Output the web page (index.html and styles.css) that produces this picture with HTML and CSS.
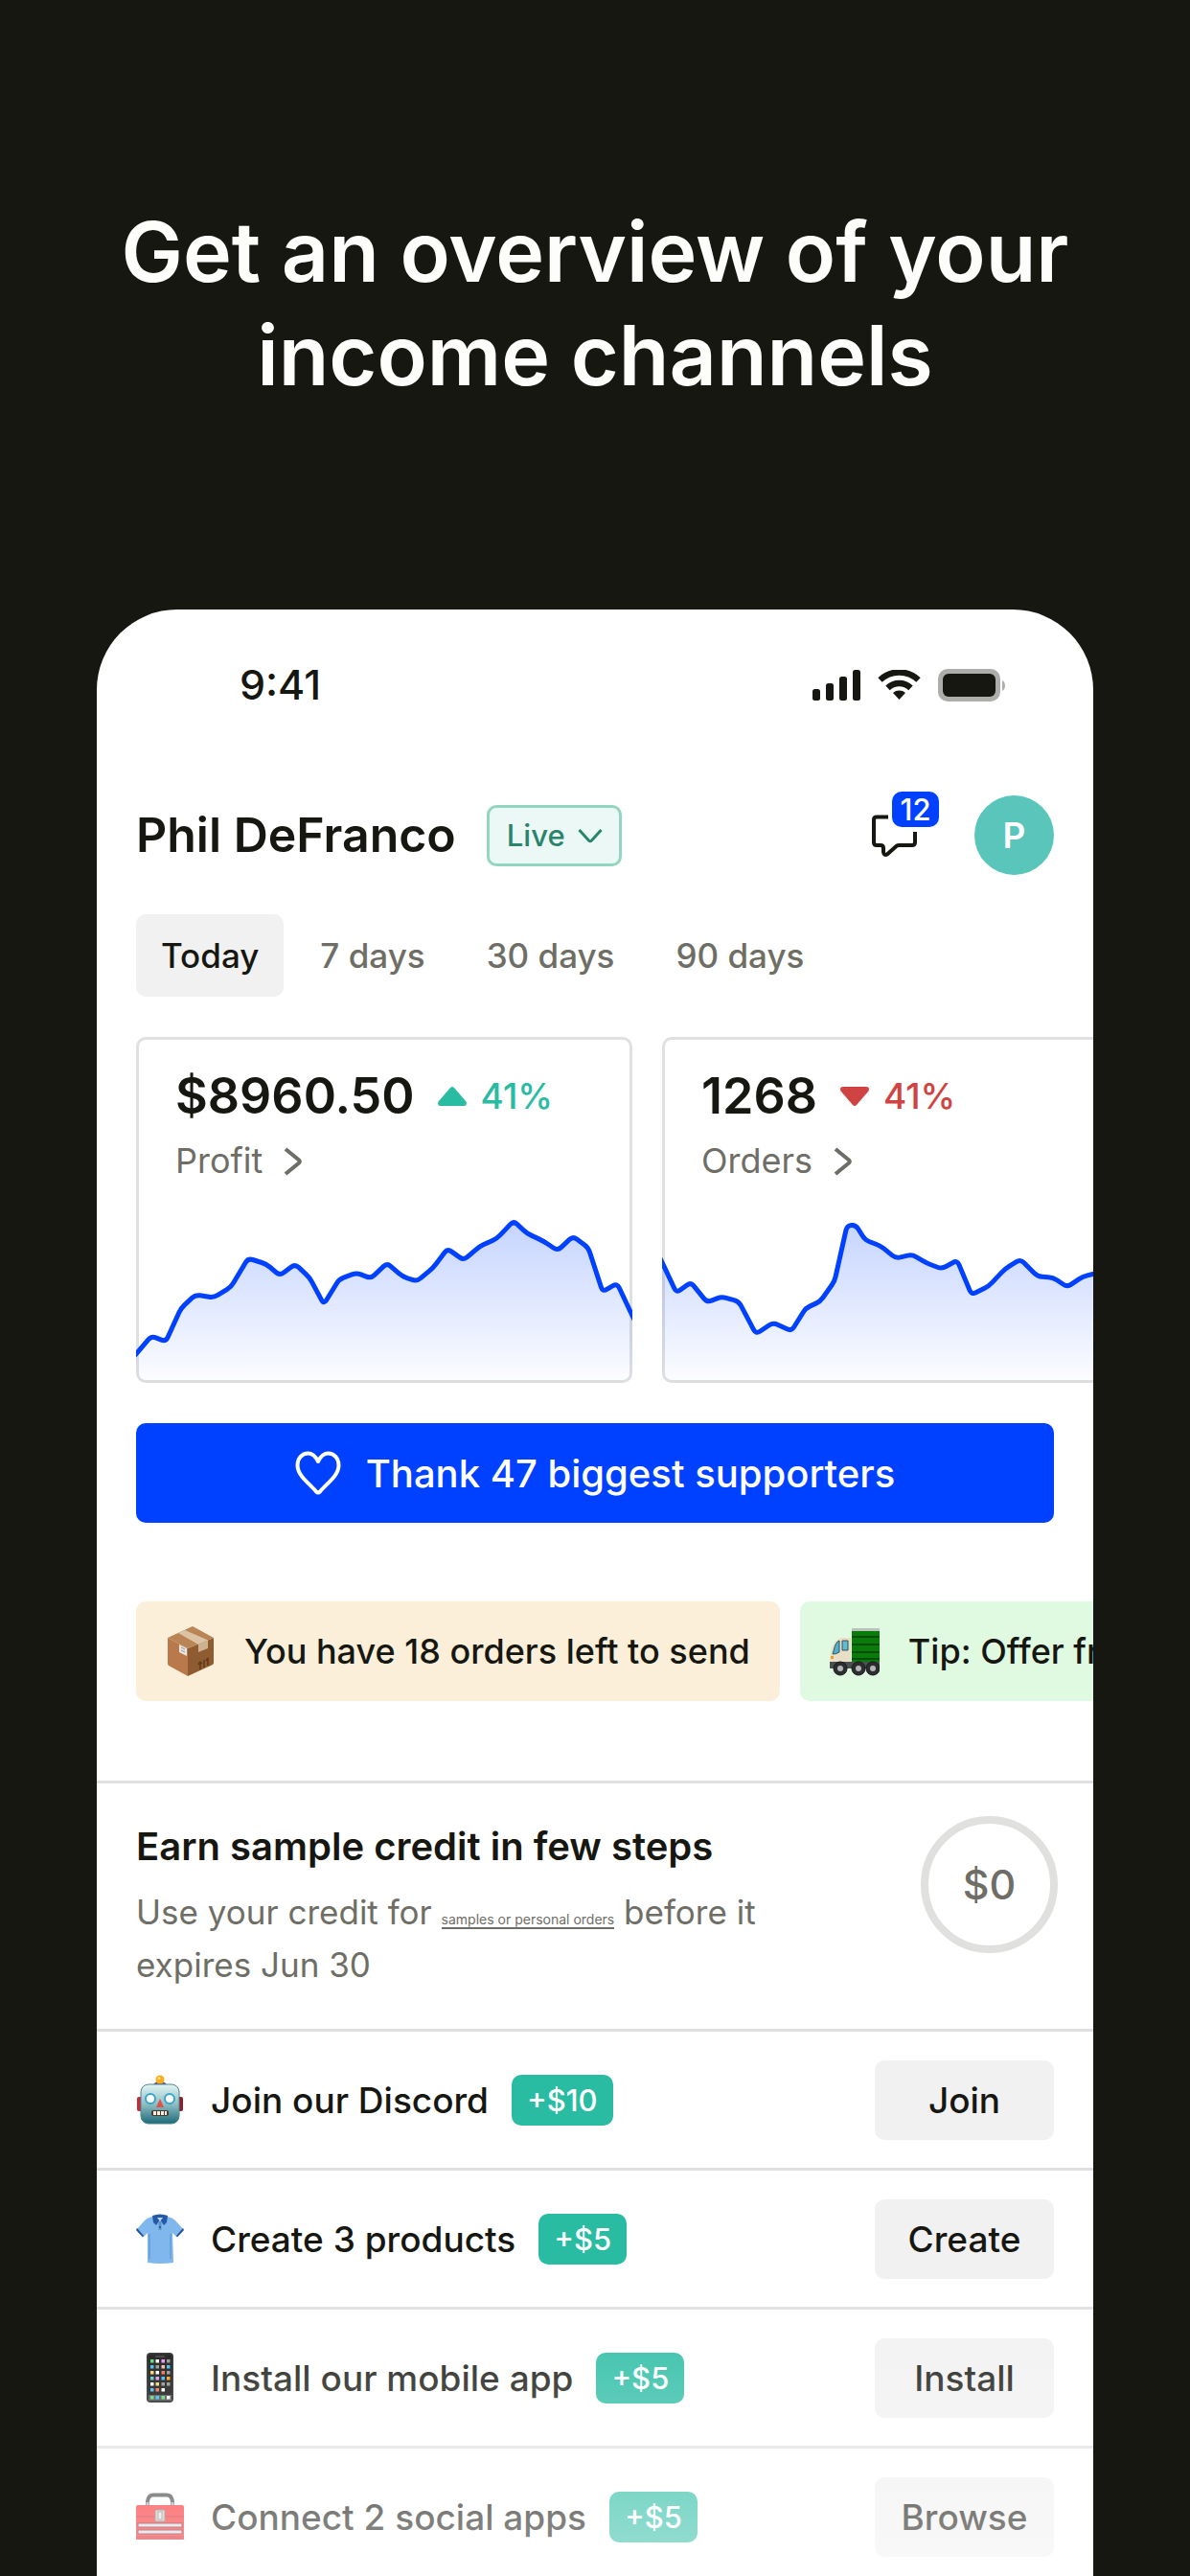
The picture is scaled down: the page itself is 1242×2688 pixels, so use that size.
FILE: index.html
```html
<!DOCTYPE html>
<html lang="en">
<head>
    <meta charset="UTF-8">
    <meta name="viewport" content="width=device-width, initial-scale=1.0">
    <title>Income overview</title>
    <link rel="stylesheet" href="styles.css">
</head>
<body>

    <h1 class="headline">Get an overview of your<br>income channels</h1>

    <main class="phone">
        <div class="status-bar">
            <span class="clock">9:41</span>
            <div class="status-icons">
                <svg width="50" height="32" viewBox="0 0 50 32" fill="#171712">
                    <rect x="0" y="20" width="8" height="12" rx="2.5"/>
                    <rect x="14" y="14" width="8" height="18" rx="2.5"/>
                    <rect x="28" y="7" width="8" height="25" rx="2.5"/>
                    <rect x="42" y="0" width="8" height="32" rx="2.5"/>
                </svg>
                <svg width="45" height="32" viewBox="0 0 45 32" fill="none" stroke="#171712" stroke-width="6.4">
                    <path d="M2.500 10.500A29 29 0 0 1 42.500 10.500"/>
                    <path d="M10.500 18.800A17.500 17.500 0 0 1 34.500 18.800"/>
                    <path d="M22.500 21.500C20 21.500 17.800 22.300 16 24L22.500 31L29 24C27.200 22.300 25 21.500 22.500 21.500z" fill="#171712" stroke="none"/>
                </svg>
                <svg width="71" height="34" viewBox="0 0 71 34">
                    <rect x="0" y="0" width="65" height="34" rx="10" fill="#adadab"/>
                    <rect x="5" y="5" width="55" height="24" rx="6" fill="#171712"/>
                    <path d="M67 12c4 2 4 9 0 11z" fill="#adadab"/>
                </svg>
            </div>
        </div>

        <header class="store">
            <h2 class="store-name">Phil DeFranco</h2>
            <div class="store-status">
                <select aria-label="Store status">
                    <option>Live</option>
                </select>
                <svg width="26" height="16" viewBox="0 0 26 16" fill="none" stroke="#2a846c" stroke-width="3">
                    <path d="M1.500 2L11.500 13Q13 14.500 14.500 13L24.500 2"/>
                </svg>
            </div>
            <button class="messages" aria-label="Messages">
                <svg width="50" height="46" viewBox="0 0 50 46" fill="none" stroke="#171712" stroke-width="4" stroke-linejoin="round">
                    <path d="M18 3.500H6Q3 3.500 3 6.500V30Q3 33 6 33H10Q13 33 13 36V40Q13.500 44.500 17.500 42L27 33.500Q28 33 29 33H43Q46 33 46 30V19"/>
                </svg>
                <span class="count">12</span>
            </button>
            <button class="avatar" aria-label="Account">P</button>
        </header>

        <nav class="periods">
            <button class="period active">Today</button>
            <button class="period">7 days</button>
            <button class="period">30 days</button>
            <button class="period">90 days</button>
        </nav>

        <section class="stats">
            <article class="stat">
                <div class="stat-top">
                    <span class="stat-value">$8960.50</span>
                    <span class="trend up">
                        <svg width="30" height="20" viewBox="0 0 30 20" fill="currentColor"><path d="M13 1Q15 -1 17 1L29.500 15.500Q31 20 27 20H3Q-1 20 .500 15.500z"/></svg>
                        41%
                    </span>
                </div>
                <a class="stat-link" href="#">Profit
                    <svg width="20" height="30" viewBox="0 0 20 30" fill="none" stroke="currentColor" stroke-width="4"><path d="M2 2L16 13.500Q17.500 15 16 16.500L2 28"/></svg>
                </a>
                <svg class="chart" data-series="profit" viewBox="0 0 518 180" preserveAspectRatio="none"></svg>
            </article>
            <article class="stat">
                <div class="stat-top">
                    <span class="stat-value">1268</span>
                    <span class="trend down">
                        <svg width="30" height="20" viewBox="0 0 30 20" fill="currentColor"><path d="M13 19Q15 21 17 19L29.500 4.500Q31 0 27 0H3Q-1 0 .500 4.500z"/></svg>
                        41%
                    </span>
                </div>
                <a class="stat-link" href="#">Orders
                    <svg width="20" height="30" viewBox="0 0 20 30" fill="none" stroke="currentColor" stroke-width="4"><path d="M2 2L16 13.500Q17.500 15 16 16.500L2 28"/></svg>
                </a>
                <svg class="chart" data-series="orders" viewBox="0 0 518 180" preserveAspectRatio="none"></svg>
            </article>
        </section>

        <button class="thank">
            <svg width="48" height="46" viewBox="0 0 48 46" fill="none" stroke="#fff" stroke-width="4" stroke-linejoin="round">
                <path d="M24 11C21 5 17.500 2.500 13.500 2.500C7 2.500 2.500 8 2.500 15C2.500 26 15 34 22 42.500Q24 44.500 26 42.500C33 34 45.500 26 45.500 15C45.500 8 41 2.500 34.500 2.500C30.500 2.500 27 5 24 11z"/>
            </svg>
            Thank 47 biggest supporters
        </button>

        <section class="notices">
            <a class="notice orders-left" href="#">
                <!-- package -->
                <svg width="52" height="52" viewBox="0 0 52 52">
                    <path d="M2 12L23 23V52L3 41Q2 40 2 39z" fill="#b9794a"/>
                    <path d="M50 12L23 23V52L49 40Q50 39 50 38z" fill="#8f5b30"/>
                    <path d="M2 12L28 0L50 12L23 23z" fill="#b98456"/>
                    <path d="M13 7L20 4L44 14.500L34 19z" fill="#dcc3a6"/>
                    <path d="M34 19L44 14.500V23L34 27z" fill="#cdb193"/>
                    <path d="M14 19L22 23V31L14 27z" fill="#e9e7e4"/>
                    <path d="M16 22l4 2M16 25l4 2" stroke="#8b93a0" stroke-width="1"/>
                    <path d="M36 37v8M36 37l-2 3M36 37l2 2M44 33v8M44 33l-2 3M40 35v8" fill="none" stroke="#5f3a1c" stroke-width="1.500"/>
                </svg>
                You have 18 orders left to send
            </a>
            <a class="notice tip" href="#">
                <!-- truck -->
                <svg width="52" height="52" viewBox="0 0 52 52">
                    <path d="M1 26Q5 13 12 12H22V42H2Q0 42 0 38z" fill="#e8dfc6"/>
                    <path d="M4 26Q6 16 10 15V27Q7 29 3 29z" fill="#4fb0cf" stroke="#355" stroke-width="1"/>
                    <path d="M13 15H19V25H13z" fill="#5fbcd8" stroke="#355" stroke-width="1"/>
                    <path d="M1 31h3v3H1z" fill="#f39a2c"/>
                    <rect x="23" y="3" width="29" height="36" fill="#0a7a0a"/>
                    <rect x="23" y="2" width="29" height="3" fill="#b9c4ba"/>
                    <path d="M23 11H52M23 19H52M23 27H52M23 34H52" stroke="#04500a" stroke-width="2"/>
                    <path d="M0 37H52V44H0z" fill="#4b4f52"/>
                    <g fill="#2c2d2f" stroke="#17181a" stroke-width="1">
                        <circle cx="11" cy="44" r="7"/><circle cx="30" cy="44" r="7"/><circle cx="45" cy="44" r="7"/>
                    </g>
                    <g fill="#b3b5b8">
                        <circle cx="11" cy="44" r="3"/><circle cx="30" cy="44" r="3"/><circle cx="45" cy="44" r="3"/>
                    </g>
                </svg>
                Tip: Offer free shipping
            </a>
        </section>

        <section class="credit">
            <div class="credit-text">
                <h3>Earn sample credit in few steps</h3>
                <p>Use your credit for <a href="#">samples or personal orders</a> before it expires Jun 30</p>
            </div>
            <div class="credit-amount">$0</div>
        </section>

        <ul class="tasks">
            <li class="task">
                <!-- robot -->
                <svg width="50" height="52" viewBox="0 0 50 52">
                    <defs>
                        <linearGradient id="robot" x1="0" y1="0" x2="0" y2="1">
                            <stop offset="0" stop-color="#e2f5f4"/>
                            <stop offset=".5" stop-color="#8fbfc4"/>
                            <stop offset="1" stop-color="#1d6a78"/>
                        </linearGradient>
                    </defs>
                    <rect x="1" y="23" width="6" height="15" rx="2" fill="#c32b38"/>
                    <rect x="43" y="23" width="6" height="15" rx="2" fill="#8c1f2b"/>
                    <path d="M18 11Q19 7 25 7Q31 7 32 11z" fill="#6b4a96"/>
                    <circle cx="25" cy="5" r="4.500" fill="#fbab1c"/>
                    <circle cx="24" cy="3.500" r="1.500" fill="#ffe27a"/>
                    <rect x="5" y="10" width="40" height="41" rx="8" fill="url(#robot)" stroke="#4f8790" stroke-width="1"/>
                    <circle cx="15" cy="25" r="5" fill="#fff" stroke="#35a4cf" stroke-width="2"/>
                    <circle cx="35" cy="25" r="5" fill="#fff" stroke="#35a4cf" stroke-width="2"/>
                    <path d="M25 25L29 34H21z" fill="#e0504a"/>
                    <rect x="16" y="37" width="18" height="6" rx="2" fill="#4a3a36"/>
                    <path d="M18 38h3v4h-3zM22 38h3v4h-3zM26 38h3v4h-3zM30 38h2v4h-2z" fill="#f5efe0"/>
                </svg>
                <span class="task-name">Join our Discord</span>
                <span class="reward">+$10</span>
                <button class="action">Join</button>
            </li>
            <li class="task">
                <!-- shirt -->
                <svg width="50" height="52" viewBox="0 0 50 52">
                    <path d="M17 3Q25 0 33 3Q38 4 41 7L49 16L42 24L38 20L39 51Q25 53 12 51L12 20L8 24L1 16L9 7Q12 4 17 3z" fill="#80b7ec"/>
                    <path d="M1 15L8 23L7 24.500L0 17zM49 15L42 23L43 24.500L50 17z" fill="#234f93"/>
                    <path d="M17 2Q25 -1 33 2L32 9L29 12L25 6L21 12L18 9z" fill="#2359a5"/>
                    <path d="M22 4H28L25 8z" fill="#bfd2e6"/>
                    <path d="M25 8V17" stroke="#5a93cc" stroke-width="3"/>
                    <path d="M14 21V47M36 21V47" stroke="#6aa5df" stroke-width="2"/>
                    <circle cx="25" cy="14" r="1" fill="#244c80"/>
                </svg>
                <span class="task-name">Create 3 products</span>
                <span class="reward">+$5</span>
                <button class="action">Create</button>
            </li>
            <li class="task">
                <!-- phone -->
                <svg width="50" height="52" viewBox="0 0 50 52">
                    <rect x="11" y="0" width="28" height="52" rx="4" fill="#1c1c1c"/>
                    <rect x="12.500" y="1.500" width="25" height="49" rx="3" fill="#050505"/>
                    <rect x="20" y="3" width="10" height="2" rx="1" fill="#2b2b2b"/>
                    <rect x="13" y="44" width="24" height="6" fill="#444"/>
                    <g fill="#4cd964"><path d="M15 7h3.500v3.500H15zM15 45h3.500v3.500H15zM26.500 45H30v3.500h-3.500z"/></g>
                    <g fill="#fff"><path d="M20.500 7H24v3.500h-3.500zM20.500 19H24v3.500h-3.500zM15 31h3.500v3.500H15zM26.500 37H30v3.500h-3.500zM32 45h3.500v3.500H32z"/></g>
                    <g fill="#e78cf0"><path d="M26.500 7H30v3.500h-3.500zM20.500 25H24v3.500h-3.500z"/></g>
                    <g fill="#8b8b8b"><path d="M32 7h3.500v3.500H32zM20.500 13H24v3.500h-3.500zM32 19h3.500v3.500H32zM26.500 31H30v3.500h-3.500zM32 31h3.500v3.500H32z"/></g>
                    <g fill="#2fb4f2"><path d="M15 13h3.500v3.500H15zM32 13h3.500v3.500H32zM26.500 25H30v3.500h-3.500zM15 37h3.500v3.500H15zM20.500 45H24v3.500h-3.500z"/></g>
                    <g fill="#f7d25a"><path d="M15 19h3.500v3.500H15zM20.500 31H24v3.500h-3.500z"/></g>
                    <g fill="#f0634f"><path d="M26.500 19H30v3.500h-3.500zM20.500 37H24v3.500h-3.500z"/></g>
                    <g fill="#ff9500"><path d="M32 25h3.500v3.500H32z"/></g>
                    <g fill="#e3bb98"><path d="M26.500 13H30v3.500h-3.500z"/></g>
                    <g fill="#48c9c0"><path d="M15 25h3.500v3.500H15z"/></g>
                </svg>
                <span class="task-name">Install our mobile app</span>
                <span class="reward">+$5</span>
                <button class="action">Install</button>
            </li>
            <li class="task">
                <!-- toolbox -->
                <svg width="50" height="52" viewBox="0 0 50 52">
                    <path d="M12 16V10Q13 3.500 18 3.500H32Q37 3.500 38 10V16" fill="none" stroke="#3d3f42" stroke-width="4"/>
                    <path d="M12 11v5M38 11v5" stroke="#a9adb3" stroke-width="3"/>
                    <rect x="0" y="14" width="50" height="36" rx="2" fill="#f8262a"/>
                    <path d="M0 26H50" stroke="#c01a1e" stroke-width="1"/>
                    <rect x="0" y="46" width="50" height="4" rx="1" fill="#d81c21"/>
                    <rect x="2" y="33" width="46" height="4" fill="#d5dbe5" stroke="#8b1518" stroke-width="1"/>
                    <rect x="2" y="40" width="46" height="4" fill="#d5dbe5" stroke="#8b1518" stroke-width="1"/>
                    <rect x="20" y="19" width="10" height="12" rx="1" fill="#c9c3c0" stroke="#7d6f6c" stroke-width="1"/>
                    <rect x="23" y="21" width="4" height="8" fill="#e8e5e2" stroke="#8a7f7c" stroke-width="1"/>
                </svg>
                <span class="task-name">Connect 2 social apps</span>
                <span class="reward">+$5</span>
                <button class="action">Browse</button>
            </li>
        </ul>
        <div class="fade"></div>
    </main>

    <script src="script.js"></script>
</body>
</html>
```
FILE: styles.css
```css
* {
    box-sizing: border-box;
}

body {
    margin: 0;
    height: 100vh;
    overflow: hidden;
    display: flex;
    flex-direction: column;
    background-color: #171712;
    color: #171712;
    font-family: 'Inter', 'Liberation Sans', sans-serif;
    font-size: 37px;
    line-height: 55px;
    font-weight: 500;
}

h1, h2, h3, p, ul {
    margin: 0;
    padding: 0;
}

button, select {
    font: inherit;
    color: inherit;
    border: none;
    background: none;
    padding: 0;
    cursor: pointer;
}

a {
    color: inherit;
    text-decoration: none;
}

svg {
    display: block;
    flex: none;
}

.headline {
    padding: 209px 40px 211px;
    color: #fdfdfb;
    font-size: 86px;
    line-height: 108px;
    font-weight: 600;
    text-align: center;
}

/* Phone */
.phone {
    position: relative;
    flex: 1;
    min-height: 0;
    margin: 0 101px;
    overflow: hidden;
    background-color: #fff;
    border-radius: 84px 84px 0 0;
}

.status-bar {
    display: flex;
    align-items: center;
    justify-content: space-between;
    height: 157px;
    padding: 0 91px 0 149px;
}

.clock {
    font-size: 43px;
}

.status-icons {
    display: flex;
    align-items: center;
    gap: 18px;
}

/* Store header */
.store {
    display: flex;
    align-items: center;
    padding: 37px 41px 0;
}

.store-name {
    font-size: 50px;
    font-weight: 600;
}

.store-status {
    position: relative;
    margin-left: 32px;
    color: #2a846c;
}

.store-status select {
    display: block;
    appearance: none;
    height: 64px;
    padding: 0 56px 0 18px;
    border: 3px solid #93d5c1;
    border-radius: 10px;
    background-color: #ebf8f5;
    font-size: 31px;
}

.store-status svg {
    position: absolute;
    right: 20px;
    top: 24px;
    pointer-events: none;
}

.messages {
    position: relative;
    margin-left: auto;
    margin-right: 58px;
}

.count {
    position: absolute;
    left: 22px;
    top: -23px;
    width: 49px;
    border-radius: 10px;
    background-color: #0041ff;
    box-shadow: 0 0 0 4px #fff;
    color: #fff;
    font-size: 31px;
    line-height: 37px;
}

.avatar {
    width: 83px;
    height: 83px;
    border-radius: 50%;
    background-color: #5ac5ba;
    color: #fff;
    font-weight: 600;
}

/* Period tabs */
.periods {
    display: flex;
    gap: 12px;
    padding: 41px 41px 0;
}

.period {
    height: 86px;
    padding: 0 26px;
    border-radius: 10px;
    color: #6e6e66;
    font-size: 35px;
}

.period.active {
    background-color: #f1f1f1;
    color: #171712;
}

/* Stat cards */
.stats {
    display: flex;
    gap: 31px;
    padding: 42px 41px 0;
    overflow: hidden;
}

.stat {
    flex: 0 0 518px;
    padding: 27px 0 0;
    border: 3px solid #e0e0e0;
    border-radius: 10px;
}

.stat-top {
    display: flex;
    align-items: center;
    gap: 24px;
    padding-left: 38px;
}

.stat-value {
    font-size: 52px;
    line-height: 63px;
    font-weight: 600;
}

.trend {
    display: flex;
    align-items: center;
    gap: 15px;
}

.trend.up {
    color: #29bca3;
}

.trend.down {
    color: #d04343;
}

.stat-link {
    display: flex;
    align-items: center;
    gap: 22px;
    margin-top: 9px;
    padding-left: 38px;
    color: #6e6e66;
    font-size: 36px;
    font-weight: 400;
}

/* Covers the card border on three sides */
.chart {
    width: calc(100% + 6px);
    height: 180px;
    margin: 24px -3px -3px;
    border-radius: 0 0 10px 10px;
}

.thank {
    display: flex;
    align-items: center;
    justify-content: center;
    gap: 26px;
    width: calc(100% - 82px);
    height: 104px;
    margin: 42px 41px 0;
    border-radius: 10px;
    background-color: #0041ff;
    color: #fff;
    font-size: 40px;
}

/* Notices */
.notices {
    display: flex;
    gap: 21px;
    padding: 82px 41px 83px;
    overflow: hidden;
}

.notice {
    display: flex;
    flex: none;
    align-items: center;
    gap: 30px;
    height: 104px;
    padding: 0 31px;
    border-radius: 10px;
    font-size: 36px;
    white-space: nowrap;
}

.notice.orders-left {
    background-color: #fbefd9;
}

.notice.tip {
    background-color: #dffae1;
}

/* Sample credit */
.credit {
    display: flex;
    align-items: flex-start;
    justify-content: space-between;
    padding: 34px 37px 39px 41px;
    border-top: 3px solid #e0e0e0;
}

.credit-text {
    max-width: 700px;
    padding-top: 4px;
}

.credit h3 {
    font-size: 40px;
    font-weight: 600;
}

.credit p {
    margin-top: 14px;
    color: #6e6e66;
    font-size: 35px;
    font-weight: 400;
}

.credit p a {
    border-bottom: 2px solid #6e6e66;
    font-size: 14px;
    line-height: 16px;
}

.credit-amount {
    width: 143px;
    height: 143px;
    border: 8px solid #e0e0df;
    border-radius: 50%;
    color: #6e6e66;
    font-size: 43px;
    line-height: 127px;
    text-align: center;
}

/* Tasks */
.tasks {
    list-style: none;
}

.task {
    display: flex;
    align-items: center;
    height: 145px;
    padding: 0 41px;
    border-top: 3px solid #e0e0e0;
}

.task-name {
    margin-left: 28px;
}

.reward {
    margin-left: 24px;
    padding: 0 16px;
    border-radius: 10px;
    background-color: #29bca3;
    color: #fff;
    font-size: 31px;
    line-height: 53px;
}

.action {
    width: 187px;
    height: 83px;
    margin-left: auto;
    border-radius: 10px;
    background-color: #f1f1f1;
}

.fade {
    position: absolute;
    left: 0;
    right: 0;
    bottom: 0;
    height: 320px;
    background: linear-gradient(to bottom, rgba(255, 255, 255, 0), rgba(255, 255, 255, 0.54));
    pointer-events: none;
}
```
FILE: script.js
```js
// Chart points, in the 518 x 180 box of the chart
const series = {
    profit: [
        [-4, 154], [0, 150], [16, 131], [31, 137], [47, 102], [62, 88], [81, 91], [99, 80], [117, 50],
        [136, 56], [150, 68], [166, 56], [181, 70], [196, 98], [212, 72], [230, 65], [245, 71],
        [262, 55], [278, 69], [293, 74], [310, 60], [325, 40], [342, 52], [358, 38], [377, 29],
        [394, 11], [408, 24], [425, 32], [440, 42], [456, 27], [472, 39], [487, 85], [502, 76],
        [518, 110], [521, 116]
    ],
    orders: [
        [-4, 46], [0, 54], [15, 86], [30, 75], [47, 96], [62, 90], [80, 95], [98, 129], [116, 117],
        [135, 126], [150, 102], [165, 95], [180, 74], [193, 16], [202, 15], [212, 31], [228, 37],
        [244, 50], [261, 46], [276, 55], [292, 61], [308, 52], [323, 88], [341, 79], [358, 61],
        [374, 51], [392, 69], [408, 70], [423, 80], [439, 69], [460, 64], [490, 56], [521, 60]
    ]
};

const RADIUS = 5;

// Line through the points with softened corners
function linePath(points) {
    let d = `M${points[0][0]} ${points[0][1]}`;
    for (let i = 1; i < points.length - 1; i++) {
        const [x, y] = points[i];
        const before = toward(points[i], points[i - 1]);
        const after = toward(points[i], points[i + 1]);
        d += `L${before[0]} ${before[1]}Q${x} ${y} ${after[0]} ${after[1]}`;
    }
    const last = points[points.length - 1];
    return d + `L${last[0]} ${last[1]}`;
}

function toward(from, to) {
    const dx = to[0] - from[0];
    const dy = to[1] - from[1];
    const length = Math.hypot(dx, dy);
    const t = Math.min(RADIUS, length / 2) / length;
    return [from[0] + dx * t, from[1] + dy * t];
}

document.querySelectorAll('.chart').forEach((chart) => {
    const name = chart.dataset.series;
    const line = linePath(series[name]);
    chart.innerHTML = `
        <defs>
            <linearGradient id="fill-${name}" x1="0" y1="0" x2="0" y2="180" gradientUnits="userSpaceOnUse">
                <stop offset="0" stop-color="#0041ff" stop-opacity="0.24"/>
                <stop offset="1" stop-color="#0041ff" stop-opacity="0.01"/>
            </linearGradient>
        </defs>
        <path d="${line}V180H-4Z" fill="url(#fill-${name})"/>
        <path d="${line}" fill="none" stroke="#0041ff" stroke-width="5" stroke-linejoin="round"/>
    `;
});
```
